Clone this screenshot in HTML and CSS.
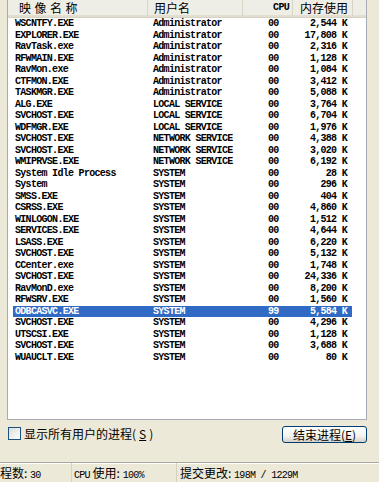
FILE: index.html
```html
<!DOCTYPE html>
<html lang="zh-CN">
<head>
    <meta charset="UTF-8">
    <title>任务管理器 - 进程</title>
    <link rel="stylesheet" href="styles.css">
</head>
<body>
    <div class="window">
        <div class="listview">
            <div class="header">
                <div class="col name-col"><span class="wide">映像名称</span></div>
                <div class="col user-col">用户名</div>
                <div class="col cpu-col mono">CPU</div>
                <div class="col mem-col">内存使用</div>
                <div class="col filler"></div>
            </div>
            <div class="rows">
                <div class="row"><span>WSCNTFY.EXE</span><span>Administrator</span><span>00</span><span class="mem">2,544 K</span></div>
                <div class="row"><span>EXPLORER.EXE</span><span>Administrator</span><span>00</span><span class="mem">17,808 K</span></div>
                <div class="row"><span>RavTask.exe</span><span>Administrator</span><span>00</span><span class="mem">2,316 K</span></div>
                <div class="row"><span>RFWMAIN.EXE</span><span>Administrator</span><span>00</span><span class="mem">1,128 K</span></div>
                <div class="row"><span>RavMon.exe</span><span>Administrator</span><span>00</span><span class="mem">1,084 K</span></div>
                <div class="row"><span>CTFMON.EXE</span><span>Administrator</span><span>00</span><span class="mem">3,412 K</span></div>
                <div class="row"><span>TASKMGR.EXE</span><span>Administrator</span><span>00</span><span class="mem">5,088 K</span></div>
                <div class="row"><span>ALG.EXE</span><span>LOCAL SERVICE</span><span>00</span><span class="mem">3,764 K</span></div>
                <div class="row"><span>SVCHOST.EXE</span><span>LOCAL SERVICE</span><span>00</span><span class="mem">6,704 K</span></div>
                <div class="row"><span>WDFMGR.EXE</span><span>LOCAL SERVICE</span><span>00</span><span class="mem">1,976 K</span></div>
                <div class="row"><span>SVCHOST.EXE</span><span>NETWORK SERVICE</span><span>00</span><span class="mem">4,388 K</span></div>
                <div class="row"><span>SVCHOST.EXE</span><span>NETWORK SERVICE</span><span>00</span><span class="mem">3,020 K</span></div>
                <div class="row"><span>WMIPRVSE.EXE</span><span>NETWORK SERVICE</span><span>00</span><span class="mem">6,192 K</span></div>
                <div class="row"><span>System Idle Process</span><span>SYSTEM</span><span>00</span><span class="mem">28 K</span></div>
                <div class="row"><span>System</span><span>SYSTEM</span><span>00</span><span class="mem">296 K</span></div>
                <div class="row"><span>SMSS.EXE</span><span>SYSTEM</span><span>00</span><span class="mem">404 K</span></div>
                <div class="row"><span>CSRSS.EXE</span><span>SYSTEM</span><span>00</span><span class="mem">4,860 K</span></div>
                <div class="row"><span>WINLOGON.EXE</span><span>SYSTEM</span><span>00</span><span class="mem">1,512 K</span></div>
                <div class="row"><span>SERVICES.EXE</span><span>SYSTEM</span><span>00</span><span class="mem">4,644 K</span></div>
                <div class="row"><span>LSASS.EXE</span><span>SYSTEM</span><span>00</span><span class="mem">6,220 K</span></div>
                <div class="row"><span>SVCHOST.EXE</span><span>SYSTEM</span><span>00</span><span class="mem">5,132 K</span></div>
                <div class="row"><span>CCenter.exe</span><span>SYSTEM</span><span>00</span><span class="mem">1,748 K</span></div>
                <div class="row"><span>SVCHOST.EXE</span><span>SYSTEM</span><span>00</span><span class="mem">24,336 K</span></div>
                <div class="row"><span>RavMonD.exe</span><span>SYSTEM</span><span>00</span><span class="mem">8,200 K</span></div>
                <div class="row"><span>RFWSRV.EXE</span><span>SYSTEM</span><span>00</span><span class="mem">1,560 K</span></div>
                <div class="row selected"><span>ODBCASVC.EXE</span><span>SYSTEM</span><span>99</span><span class="mem">5,584 K</span></div>
                <div class="row"><span>SVCHOST.EXE</span><span>SYSTEM</span><span>00</span><span class="mem">4,296 K</span></div>
                <div class="row"><span>UTSCSI.EXE</span><span>SYSTEM</span><span>00</span><span class="mem">1,128 K</span></div>
                <div class="row"><span>SVCHOST.EXE</span><span>SYSTEM</span><span>00</span><span class="mem">3,688 K</span></div>
                <div class="row"><span>WUAUCLT.EXE</span><span>SYSTEM</span><span>00</span><span class="mem">80 K</span></div>
            </div>
        </div>

        <div class="controls">
            <label class="check">
                <span class="box"></span>
                显示所有用户的进程(<u>S</u>)
            </label>
            <button class="end-btn">结束进程(<u>E</u>)</button>
        </div>

        <div class="statusbar">
            <div class="pane first">进程数: <span class="mono">30</span></div>
            <div class="pane second"><span class="mono">CPU</span> 使用: <span class="mono">100%</span></div>
            <div class="pane third">提交更改: <span class="mono">198M / 1229M</span></div>
        </div>
    </div>
</body>
</html>
```

FILE: styles.css
```css
body {
    margin: 0;
    padding: 0;
    background-color: #ece9d8;
    font-family: "Noto Sans CJK SC", "Liberation Sans", sans-serif;
    font-size: 12px;
    color: #000;
}

.window {
    width: 379px;
    height: 482px;
    display: flex;
    flex-direction: column;
    overflow: hidden;
}

.mono {
    font-family: "Liberation Mono", "Noto Sans CJK SC", monospace;
    font-size: 10px;
    letter-spacing: -0.7px;
}

/* list view */
.listview {
    margin-left: 7px;
    width: 358px;
    height: 419px;
    background: #fff;
    border: 1px solid #a5acb5;
    border-top: none;
    overflow: hidden;
}

.header {
    display: flex;
    height: 17px;
    background: #efeee6;
    border-bottom: 1px solid #d5d2c2;
    box-shadow: inset 0 -2px 0 #e2dfd0;
}

.header .col {
    height: 17px;
    line-height: 16px;
    border-right: 1px solid #d8d5c6;
    box-sizing: border-box;
    white-space: nowrap;
}

.name-col {
    width: 140px;
    padding-left: 11px;
}

.wide {
    letter-spacing: 3.5px;
}

.user-col {
    width: 95px;
    padding-left: 6px;
}

.header .cpu-col {
    width: 50px;
    text-align: right;
    padding-right: 3px;
    font-size: 10px;
    font-weight: bold;
}

.mem-col {
    width: 60px;
    text-align: right;
    padding-right: 4px;
}

.header .filler {
    flex: 1;
    border-right: none;
}

.row {
    display: grid;
    grid-template-columns: 134px 95px 50px 60px;
    width: 339px;
    margin-left: 5px;
    height: 11.5px;
    line-height: 11.5px;
    font-family: "Liberation Mono", monospace;
    font-size: 10px;
    font-weight: bold;
    letter-spacing: -0.7px;
    white-space: nowrap;
}

.row span:nth-child(1) {
    padding-left: 2px;
}

.row span:nth-child(2) {
    padding-left: 6px;
}

.row span:nth-child(3) {
    padding-left: 26px;
}

.row .mem {
    text-align: right;
    padding-right: 5px;
}

.row.selected {
    background: #316ac5;
    color: #fff;
}

/* checkbox + button */
.controls {
    height: 42px;
    display: flex;
    justify-content: space-between;
    align-items: flex-start;
    padding: 6px 12px 0 8px;
    box-sizing: border-box;
}

.check {
    display: flex;
    align-items: center;
    gap: 3px;
    margin-top: 1px;
    height: 13px;
    line-height: 13px;
}

.box {
    width: 11px;
    height: 11px;
    border: 1px solid #1c5180;
    background: linear-gradient(135deg, #dcdcd7, #fff);
}

.end-btn {
    width: 85px;
    height: 17px;
    padding: 0;
    font-family: "Noto Sans CJK SC", sans-serif;
    font-size: 12px;
    line-height: 14px;
    color: #000;
    border: 1px solid #003c74;
    border-radius: 3px;
    background: linear-gradient(#fff, #f4f3ee 60%, #d6d0c5);
}

u {
    text-decoration: underline;
}

/* status bar */
.statusbar {
    height: 19px;
    display: flex;
    border-top: 1px solid #aca899;
    box-shadow: inset 0 1px 0 #fff;
    line-height: 19px;
    white-space: nowrap;
}

.pane {
    border-right: 1px solid #d6d2c2;
    box-sizing: border-box;
}

.pane.first {
    margin-left: -12px;
    width: 84px;
}

.pane.second {
    width: 105px;
    padding-left: 2px;
}

.pane.third {
    border-right: none;
    padding-left: 3px;
}
```
